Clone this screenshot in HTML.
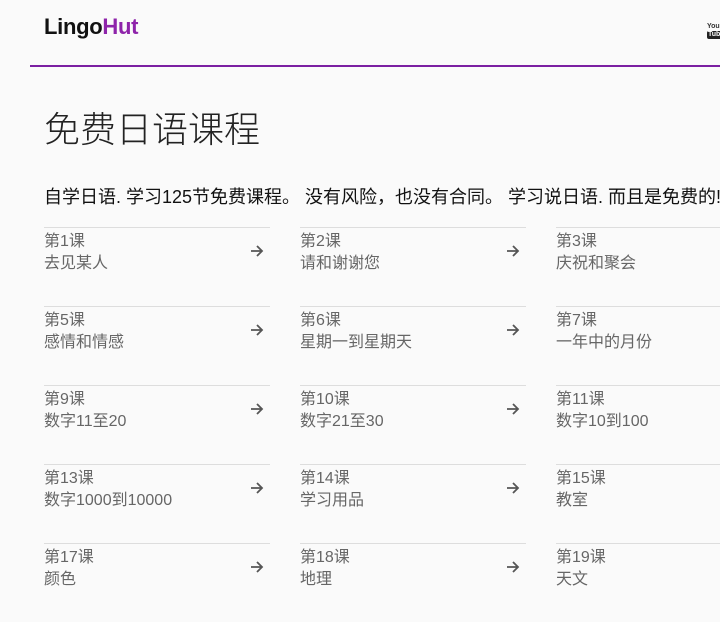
<!DOCTYPE html>
<html><head><meta charset="utf-8"><style>
body{margin:0;background:#fafafa;width:720px;height:608px;overflow:hidden;font-family:"Liberation Sans","Noto Sans CJK SC",sans-serif;position:relative}
.logo{position:absolute;left:44px;top:14px;font-size:22px;font-weight:bold;color:#111;letter-spacing:-0.3px}
.logo span{color:#8e24aa}
.line{position:absolute;left:30px;right:0;top:65px;height:2px;background:#7b1fa2}
h1{position:absolute;left:44px;top:101px;margin:0;font-size:36px;font-weight:300;color:#222;white-space:nowrap}
.sub{position:absolute;left:44px;top:183px;font-size:18px;color:#111;white-space:nowrap}
.item{position:absolute;width:226px;height:79px;border-top:1px solid #ddd;color:#666;font-size:16px;line-height:22px;box-sizing:border-box;padding-top:3px}
.item svg{position:absolute;right:6px;top:16px}
.yt{position:absolute;left:707px;top:23px;font-size:7px;line-height:8px;color:#333;font-weight:bold}
.yt b{display:block;background:#222;color:#fff;border-radius:2px;padding:0 1px}
</style></head><body>
<div class="logo">Lingo<span>Hut</span></div>
<div class="yt">You<b>Tube</b></div>
<div class="line"></div>
<h1>免费日语课程</h1>
<div class="sub">自学日语. 学习125节免费课程。 没有风险，也没有合同。 学习说日语. 而且是免费的!</div>
<svg width="0" height="0" style="position:absolute"><defs><symbol id="ar" viewBox="0 0 14 14"><path d="M1 7H12M7 2L12 7L7 12" fill="none" stroke="#555" stroke-width="1.8"/></symbol></defs></svg>
<div class="item" style="left:44px;top:227px">第1课<br>去见某人<svg width="14" height="14"><use href="#ar"/></svg></div>
<div class="item" style="left:300px;top:227px">第2课<br>请和谢谢您<svg width="14" height="14"><use href="#ar"/></svg></div>
<div class="item" style="left:556px;top:227px">第3课<br>庆祝和聚会</div>
<div class="item" style="left:44px;top:306px">第5课<br>感情和情感<svg width="14" height="14"><use href="#ar"/></svg></div>
<div class="item" style="left:300px;top:306px">第6课<br>星期一到星期天<svg width="14" height="14"><use href="#ar"/></svg></div>
<div class="item" style="left:556px;top:306px">第7课<br>一年中的月份</div>
<div class="item" style="left:44px;top:385px">第9课<br>数字11至20<svg width="14" height="14"><use href="#ar"/></svg></div>
<div class="item" style="left:300px;top:385px">第10课<br>数字21至30<svg width="14" height="14"><use href="#ar"/></svg></div>
<div class="item" style="left:556px;top:385px">第11课<br>数字10到100</div>
<div class="item" style="left:44px;top:464px">第13课<br>数字1000到10000<svg width="14" height="14"><use href="#ar"/></svg></div>
<div class="item" style="left:300px;top:464px">第14课<br>学习用品<svg width="14" height="14"><use href="#ar"/></svg></div>
<div class="item" style="left:556px;top:464px">第15课<br>教室</div>
<div class="item" style="left:44px;top:543px">第17课<br>颜色<svg width="14" height="14"><use href="#ar"/></svg></div>
<div class="item" style="left:300px;top:543px">第18课<br>地理<svg width="14" height="14"><use href="#ar"/></svg></div>
<div class="item" style="left:556px;top:543px">第19课<br>天文</div>
</body></html>
